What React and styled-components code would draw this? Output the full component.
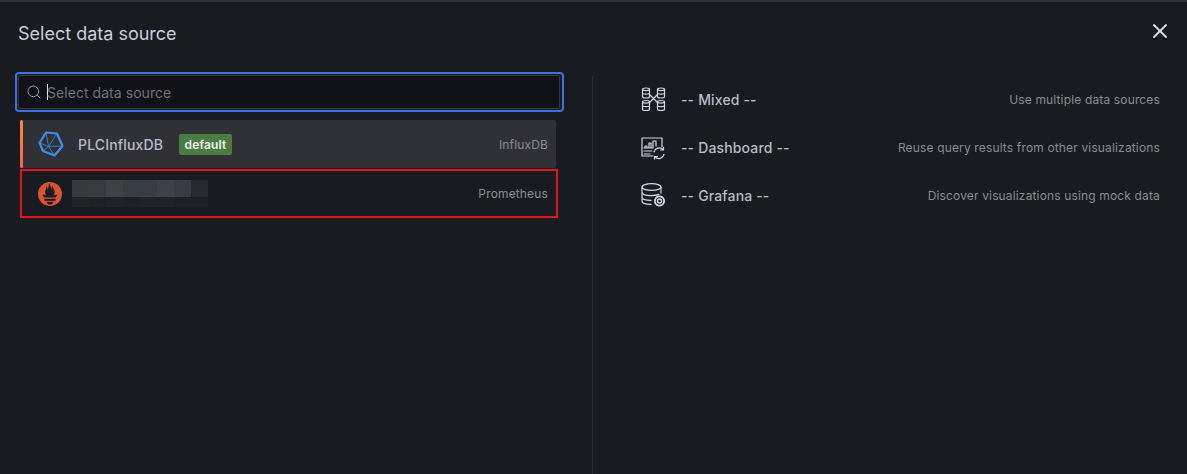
import React from "react";
import styled, { createGlobalStyle } from "styled-components";
import { Search, X } from "lucide-react";
import { SiPrometheus } from "react-icons/si";

const Global = createGlobalStyle`
  html, body { margin: 0; padding: 0; background: #181b1f; }
  * { box-sizing: border-box; }
`;

const Page = styled.div`
  width: 1187px;
  height: 474px;
  overflow: hidden;
  background: #181b1f;
  border-top: 2px solid #2e3034;
  font-family: Inter, "Liberation Sans", sans-serif;
  color: #ccccdc;
  display: flex;
  flex-direction: column;
`;

const Header = styled.header`
  height: 70px;
  flex: none;
  display: flex;
  justify-content: space-between;
  padding: 21px 18px 0 18px;
`;

const Title = styled.h1`
  margin: 0;
  font-size: 18px;
  line-height: 22px;
  font-weight: 400;
  color: #ccccdc;
`;

const CloseButton = styled.button`
  all: unset;
  display: flex;
  width: 24px;
  height: 24px;
  margin: -4px -3px 0 0;
  color: #d8d8e2;
`;

const Body = styled.div`
  flex: 1;
  display: flex;
  min-height: 0;
`;

const LeftColumn = styled.div`
  width: 592px;
  flex: none;
  padding-left: 15px;
  display: flex;
  flex-direction: column;
`;

const SearchRing = styled.div`
  width: 549px;
  height: 40px;
  border: 2px solid #3d71d9;
  border-radius: 4px;
  padding: 1px 2px 1px 1px;
  flex: none;
`;

const SearchField = styled.div`
  height: 100%;
  background: #111217;
  border: 1px solid #34363b;
  border-radius: 2px;
  padding-left: 7px;
  display: flex;
  align-items: center;
  color: #9a9ba5;
`;

const Caret = styled.span`
  width: 1px;
  height: 16px;
  margin: 0 -1px 0 5px;
  background: #e0e0e8;
  flex: none;
`;

const Placeholder = styled.span`
  font-size: 14px;
  letter-spacing: 0.05px;
  color: #6f7178;
`;

const List = styled.div`
  margin: 8px 0 0 5px;
  display: flex;
  flex-direction: column;
  gap: 1px;
`;

const SelectedRow = styled.div`
  width: 536px;
  height: 48px;
  background: #2f3136;
  border-radius: 2px;
  display: flex;
  align-items: center;
  padding-right: 8px;
`;

const Accent = styled.span`
  width: 3px;
  align-self: stretch;
  border-radius: 2px;
  background: linear-gradient(180deg, #ff8a33, #f5604a);
  flex: none;
  margin-right: 15px;
`;

const OutlinedRow = styled.div`
  width: 538px;
  height: 49px;
  border: 2px solid #e3141c;
  display: flex;
  align-items: center;
  padding: 0 8px 0 16px;
`;

const Name = styled.span`
  font-size: 14px;
  font-weight: 500;
  letter-spacing: 0.15px;
  color: #b9bac6;
  margin-left: 14px;
`;

const Badge = styled.span`
  margin-left: 16px;
  height: 21px;
  padding: 0 5.5px;
  display: flex;
  align-items: center;
  background: #4a7c43;
  border-radius: 2px;
  font-size: 12px;
  font-weight: 600;
  letter-spacing: 0.15px;
  color: #f0f3ee;
`;

const TypeLabel = styled.span`
  margin-left: auto;
  font-size: 12px;
  letter-spacing: 0.15px;
  color: #8a8b94;
`;

const Mosaic = styled.div`
  margin-left: 10px;
  display: grid;
  grid-template-columns: repeat(8, 17px);
  grid-template-rows: 17px 10px;
`;

const MosaicCell = styled.span`
  background: ${(p) => p.$c};
`;

const RightColumn = styled.div`
  flex: 1;
  margin-top: 4px;
  border-left: 1px solid #2b2d31;
  padding: 0 27px 0 47px;
`;

const SourceRow = styled.div`
  height: 48px;
  padding-bottom: 2px;
  display: flex;
  align-items: center;
`;

const SourceName = styled.span`
  margin-left: 13px;
  font-size: 14px;
  font-weight: 500;
  letter-spacing: 0.15px;
  color: #b9bac6;
`;

const SourceDesc = styled.span`
  margin-left: auto;
  font-size: 12px;
  letter-spacing: 0.15px;
  color: #8a8b94;
`;

const IconSvg = styled.svg`
  width: 28px;
  height: 28px;
  flex: none;
  fill: none;
  stroke: #d6d7e0;
  stroke-width: 1.2;
  stroke-linejoin: round;
  stroke-linecap: round;
`;

const InfluxIcon = () => (
  <svg width="26" height="26" viewBox="0 0 26 26" fill="none" stroke="#3d8fe6" strokeLinejoin="round" style={{ flex: "none" }}>
    <path d="M8 1.5 L19 2.5 L24.5 15 L16.5 24.5 L5 20 L1.5 12 Z" strokeWidth="2.2" />
    <path d="M19 2.5 L10.5 15.5 L24.5 15 M10.5 15.5 L5 20 M10.5 15.5 L16.5 24.5 M8 1.5 L10.5 15.5 M1.5 12 L10.5 15.5" strokeWidth="0.8" />
  </svg>
);

const Cyl = ({ x, y, w = 7, h = 10 }) => (
  <g>
    <ellipse cx={x + w / 2} cy={y + 1.3} rx={w / 2} ry="1.3" />
    <path d={`M${x} ${y + 1.3} V${y + h - 1.3} C${x} ${y + h + 0.4} ${x + w} ${y + h + 0.4} ${x + w} ${y + h - 1.3} V${y + 1.3}`} />
    <path d={`M${x} ${y + h / 2} C${x} ${y + h / 2 + 1.5} ${x + w} ${y + h / 2 + 1.5} ${x + w} ${y + h / 2}`} />
  </g>
);

const MixedIcon = () => (
  <IconSvg viewBox="0 0 28 28">
    <Cyl x={2.5} y={3} />
    <Cyl x={17.5} y={3} />
    <Cyl x={2.5} y={15.5} />
    <Cyl x={17.5} y={15.5} />
    <path d="M9.5 9.5 L17.5 17.5 M17.5 9.5 L9.5 17.5" />
  </IconSvg>
);

const DashIcon = () => (
  <IconSvg viewBox="0 0 28 28">
    <path d="M13 23 H2 V5 H22 V14" />
    <path d="M5 15 V13 H7 V15 M9 15 V10 H11 V15 M13 15 V8 H16 V13 M4 15 H13 M4 18 H12 M4 21 H10" />
    <path d="M14 19 A5.4 5.4 0 0 1 23 16.5 M23.5 14 V17 H20.5 M24 21.5 A5.4 5.4 0 0 1 15 24 M14.5 26 V23.5 H17.5" />
  </IconSvg>
);

const GrafanaIcon = () => (
  <IconSvg viewBox="0 0 28 28">
    <ellipse cx="11.5" cy="6" rx="9.5" ry="3.4" />
    <path d="M2 6 V20 C2 22 6 23.4 11 23.4 M21 6 V12 M2 11 C2 13.4 6.5 14.6 11.5 14.6 C14.5 14.6 17 14.2 19 13.4 M2 16 C2 18 6 19.4 11 19.4" />
    <circle cx="19.5" cy="20" r="2" strokeWidth="1.5" />
    <circle cx="19.5" cy="20" r="4.6" strokeWidth="1.8" strokeDasharray="1.8 1.1" />
  </IconSvg>
);

const topCells = ["#37393d", "#363a41", "#404145", "#383c43", "#393c43", "#3f4146", "#383b42", "#26292d"];
const lowCells = ["#1f2226", "#1d2024", "#1f2226", "#1d2125", "#1f2226", "#1f2226", "#1d2125", "#1d2024"];

const sources = [
  { name: "-- Mixed --", desc: "Use multiple data sources", Icon: MixedIcon },
  { name: "-- Dashboard --", desc: "Reuse query results from other visualizations", Icon: DashIcon },
  { name: "-- Grafana --", desc: "Discover visualizations using mock data", Icon: GrafanaIcon },
];

export default function App() {
  return (
    <Page>
      <Global />
      <Header>
        <Title>Select data source</Title>
        <CloseButton aria-label="Close">
          <X size={24} strokeWidth={2} />
        </CloseButton>
      </Header>
      <Body>
        <LeftColumn>
          <SearchRing>
            <SearchField>
              <Search size={16} strokeWidth={1.5} />
              <Caret />
              <Placeholder>Select data source</Placeholder>
            </SearchField>
          </SearchRing>
          <List>
            <SelectedRow>
              <Accent />
              <InfluxIcon />
              <Name>PLCInfluxDB</Name>
              <Badge>default</Badge>
              <TypeLabel>InfluxDB</TypeLabel>
            </SelectedRow>
            <OutlinedRow>
              <SiPrometheus size={24} color="#dc5230" style={{ flex: "none" }} />
              <Mosaic aria-hidden="true">
                {topCells.map((c, i) => <MosaicCell key={`t${i}`} $c={c} />)}
                {lowCells.map((c, i) => <MosaicCell key={`l${i}`} $c={c} />)}
              </Mosaic>
              <TypeLabel>Prometheus</TypeLabel>
            </OutlinedRow>
          </List>
        </LeftColumn>
        <RightColumn>
          {sources.map(({ name, desc, Icon }) => (
            <SourceRow key={name}>
              <Icon />
              <SourceName>{name}</SourceName>
              <SourceDesc>{desc}</SourceDesc>
            </SourceRow>
          ))}
        </RightColumn>
      </Body>
    </Page>
  );
}
